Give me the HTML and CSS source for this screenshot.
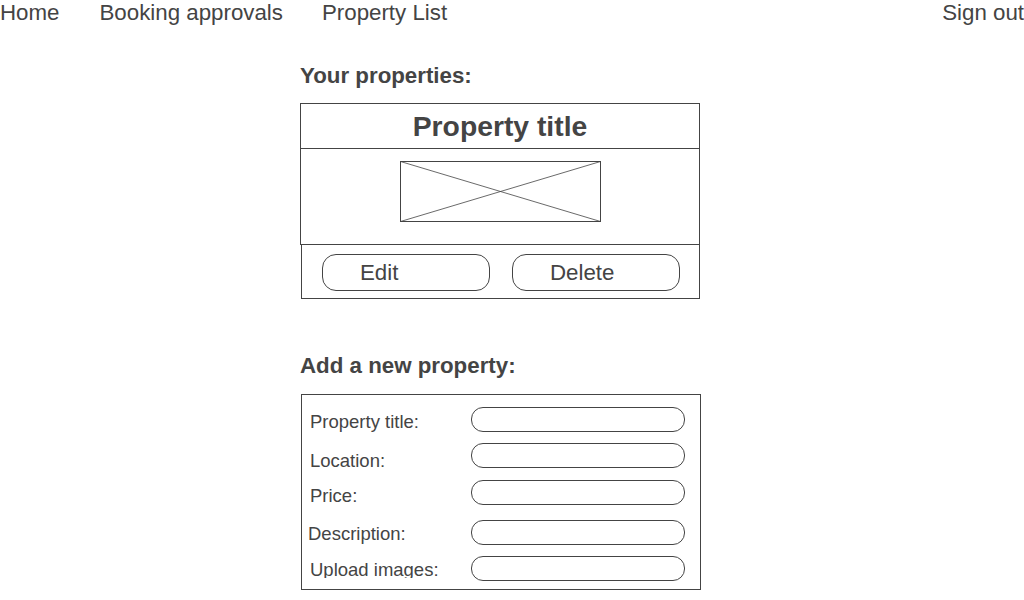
FILE: index.html
```html
<!DOCTYPE html>
<html lang="en">
<head>
<meta charset="utf-8">
<title>Your properties</title>
<link rel="stylesheet" href="styles.css">
</head>
<body>
<nav class="nav">
  <a class="nav-link" href="#">Home</a>
  <a class="nav-link" href="#">Booking approvals</a>
  <a class="nav-link" href="#">Property List</a>
  <a class="nav-link nav-signout" href="#">Sign out</a>
</nav>
<main class="main">
  <h2 class="heading heading-first">Your properties:</h2>
  <section class="card">
    <div class="card-top">
      <div class="card-title">Property title</div>
      <div class="card-image">
        <svg class="placeholder" width="201" height="61" viewBox="0 0 201 61" aria-hidden="true">
          <rect x="0.5" y="0.5" width="200" height="60" fill="none" stroke="#444" stroke-width="1"/>
          <line x1="0.5" y1="0.5" x2="200.5" y2="60.5" stroke="#444" stroke-width="0.8"/>
          <line x1="200.5" y1="0.5" x2="0.5" y2="60.5" stroke="#444" stroke-width="0.8"/>
        </svg>
      </div>
    </div>
    <div class="card-actions">
      <button class="btn" type="button">Edit</button>
      <button class="btn" type="button">Delete</button>
    </div>
  </section>
  <h2 class="heading heading-second">Add a new property:</h2>
  <form class="form">
    <div class="row"><label class="label">Property title:</label><input class="field" type="text"></div>
    <div class="row"><label class="label">Location:</label><input class="field" type="text"></div>
    <div class="row"><label class="label">Price:</label><input class="field" type="text"></div>
    <div class="row"><label class="label">Description:</label><input class="field" type="text"></div>
    <div class="row"><label class="label">Upload images:</label><input class="field" type="text"></div>
  </form>
</main>
</body>
</html>
```
FILE: styles.css
```css
* { box-sizing: border-box; }
html, body { margin: 0; padding: 0; background: #fff; }
body {
  font-family: "Liberation Sans", Arial, sans-serif;
  color: #444;
  width: 1024px;
  height: 600px;
  overflow: hidden;
}

.nav {
  display: flex;
  gap: 39px;
  height: 25px;
  font-size: 22.3px;
  line-height: 25px;
}
.nav-link { color: #444; text-decoration: none; white-space: nowrap; }
.nav-link:first-child { margin-right: 1px; }
.nav-signout { margin-left: auto; }

.main { margin-left: 300px; width: 400px; }

.heading {
  font-size: 22.3px;
  line-height: 25px;
  font-weight: bold;
  margin: 0;
}
.heading-first { margin: 38px 0 15px; }
.heading-second { margin: 54px 0 16px; }

.card { width: 400px; }
.card-top { border: 1px solid #444; }
.card-title {
  text-align: center;
  font-size: 28.3px;
  line-height: 32px;
  font-weight: bold;
  padding: 6px 0 6px;
  border-bottom: 1px solid #444;
}
.card-image {
  display: flex;
  justify-content: center;
  padding: 12px 0 22px;
}
.placeholder { display: block; }

.card-actions {
  display: flex;
  gap: 22px;
  margin-left: 1px;
  width: 399px;
  border: 1px solid #444;
  border-top: none;
  padding: 9px 19px 7px 20px;
}
.btn {
  width: 168px;
  height: 37px;
  border: 1px solid #444;
  border-radius: 14px;
  background: #fff;
  color: #444;
  font-family: "Liberation Sans", Arial, sans-serif;
  font-size: 22.3px;
  line-height: 25px;
  text-align: left;
  padding: 0 0 0 37px;
  margin: 0;
  display: flex;
  align-items: center;
}

.form {
  margin: 0 0 0 1px;
  width: 400px;
  border: 1px solid #444;
  padding: 12px 0 8px 8px;
}
.row {
  display: flex;
  align-items: flex-start;
  height: 25px;
}
.row:nth-child(2) { margin-top: 11px; }
.row:nth-child(3) { margin-top: 12px; }
.row:nth-child(4) { margin-top: 15px; }
.row:nth-child(5) { margin-top: 11px; }

.label {
  width: 161px;
  flex: none;
  font-size: 18.5px;
  line-height: 21px;
  white-space: nowrap;
}
.row:nth-child(1) .label { margin-top: 4px; }
.row:nth-child(2) .label { margin-top: 7px; }
.row:nth-child(3) .label { margin-top: 5px; }
.row:nth-child(4) .label { margin-top: 3px; margin-left: -2px; width: 163px; }
.row:nth-child(5) .label { margin-top: 3px; height: 18.5px; overflow: hidden; }

.field {
  width: 214px;
  height: 25px;
  margin: 0;
  padding: 0 10px;
  border: 1px solid #444;
  border-radius: 12px;
  background: #fff;
  font-family: "Liberation Sans", Arial, sans-serif;
  font-size: 14px;
  color: #444;
  outline: none;
}
```
